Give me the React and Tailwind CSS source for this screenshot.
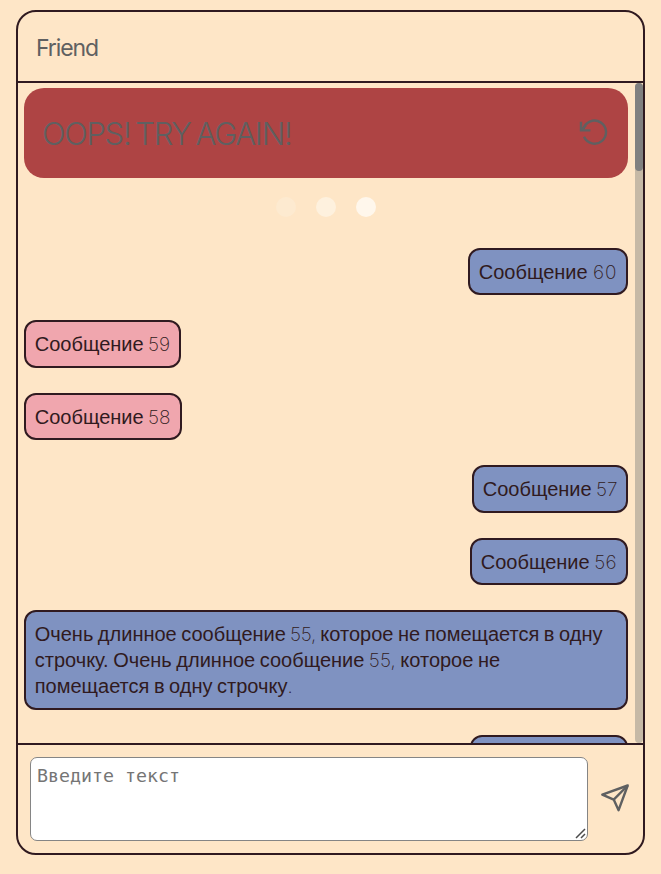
const messages = [
  { number: 60, mine: true, width: 'w-[160px]', fit: 'tracking-[1px]' },
  { number: 59, mine: false, width: 'w-[157px]', fit: 'tracking-[0px]' },
  { number: 58, mine: false, width: 'w-[158px]', fit: 'tracking-[0px]' },
  { number: 57, mine: true, width: 'w-[156px]', fit: 'tracking-[0px]' },
  { number: 56, mine: true, width: 'w-[158px]', fit: 'tracking-[0.3px]' },
];

function Num({ fit = 'tracking-[-0.2px]', children }) {
  return <span className={`font-['Inter'] text-[19px] leading-none font-extralight ${fit}`}>{children}</span>;
}

function Bubble({ mine, width, children }) {
  return (
    <div
      className={`shrink-0 rounded-[12px] border-2 border-[#301a20] pt-[8.75px] pb-[8.75px] pl-[8.75px] whitespace-nowrap [word-spacing:-1px] ${width} ${
        mine ? 'self-end bg-[#7f92c1]' : 'self-start bg-[#f0a6ae]'
      }`}
    >
      {children}
    </div>
  );
}

function RetryIcon() {
  return (
    <svg width="30" height="28" viewBox="0 0 30 28" fill="none" stroke="#5f6061" strokeWidth="2.4">
      <path d="M5.4 10.2A11.5 11.5 0 1 1 6 17.8" />
      <path d="M3 2.8v8.6h9.4" />
      <path d="M3.4 11l4.4-4.6" />
    </svg>
  );
}

function SendIcon() {
  return (
    <svg width="30" height="28" viewBox="0 0 30 28" fill="none" stroke="#5f6061" strokeWidth="2.4" strokeLinejoin="round">
      <path d="M27.7 1.5L2.3 10.7L13.7 15.6L18.6 26.2Z" />
      <path d="M27.7 1.5L13.7 15.6" />
    </svg>
  );
}

export default function App() {
  return (
    <div className="h-[874px] w-[661px] overflow-hidden bg-[#fee6c7] pt-[10px] pl-[16px] font-['Liberation_Sans',sans-serif] text-[#301a20]">
      <div className="flex h-[845px] w-[629px] flex-col overflow-hidden rounded-[20px] border-2 border-[#301a20]">
        <header className="flex h-[71px] shrink-0 items-center border-b-2 border-[#301a20] pt-[3px] pl-[18px] font-['Inter'] text-[23px] text-[#5f6061]">
          <span className="tracking-[-1.1px]">Friend</span>
        </header>

        <main className="flex h-[660px] shrink-0 overflow-hidden">
          <div className="flex w-[617px] shrink-0 flex-col pt-[5px] pr-[7px] pl-[6px] text-[20px] leading-[26px]">
            <div className="flex h-[90px] shrink-0 items-center justify-between rounded-[20px] bg-[#ae4444] pr-[20px] pl-[18px] text-[#5f6061]">
              <span className="pt-[2px] font-['Inter'] text-[31px] font-light tracking-[-1.3px] whitespace-nowrap [word-spacing:-2.5px]">
                OOPS! TRY AGAIN!
              </span>
              <RetryIcon />
            </div>
            <div className="mt-[19px] flex shrink-0 justify-center gap-[20px]">
              <i className="size-[20px] rounded-full bg-[#fdead0]" />
              <i className="size-[20px] rounded-full bg-[#fef1de]" />
              <i className="size-[20px] rounded-full bg-[#fff7ec]" />
            </div>
            <div className="mt-[30.8px] flex flex-col gap-[25px]">
              {messages.map((m) => (
                <Bubble key={m.number} mine={m.mine} width={m.width}>
                  Сообщение<Num fit={m.fit}> {m.number}</Num>
                </Bubble>
              ))}
              <Bubble mine width="w-full">
                Очень длинное сообщение<Num> 55, </Num>которое не помещается в одну<br />
                строчку. Очень длинное сообщение<Num fit="tracking-[0.1px]"> 55, </Num>которое не<br />
                помещается в одну строчку<Num>.</Num>
              </Bubble>
              <Bubble mine width="w-[158px]">
                Сообщение<Num> 54</Num>
              </Bubble>
            </div>
          </div>
          <div className="h-full w-[8px] shrink-0 rounded-[4px] bg-[#c6b9a6]">
            <div className="h-[88px] w-full rounded-[4px] bg-[#808080]" />
          </div>
        </main>

        <footer className="flex flex-1 items-start border-t-2 border-[#301a20] pt-[12px] pl-[12px]">
          <div className="relative h-[84px] w-[558px] shrink-0">
            <textarea
              className="block h-full w-full resize-none rounded-[7px] border border-[#858585] bg-white px-[6px] py-[7px] font-['DejaVu_Sans_Mono',monospace] text-[18.3px] leading-[22px] placeholder:text-[#757575]"
              placeholder="Введите текст"
            />
            <svg className="absolute right-[2px] bottom-[2px]" width="11" height="11" viewBox="0 0 11 11" stroke="#4b4b4b" strokeWidth="1.5">
              <path d="M1 10L10 1M6 10l4-4" />
            </svg>
          </div>
          <div className="mt-[27px] ml-[12px]">
            <SendIcon />
          </div>
        </footer>
      </div>
    </div>
  );
}
